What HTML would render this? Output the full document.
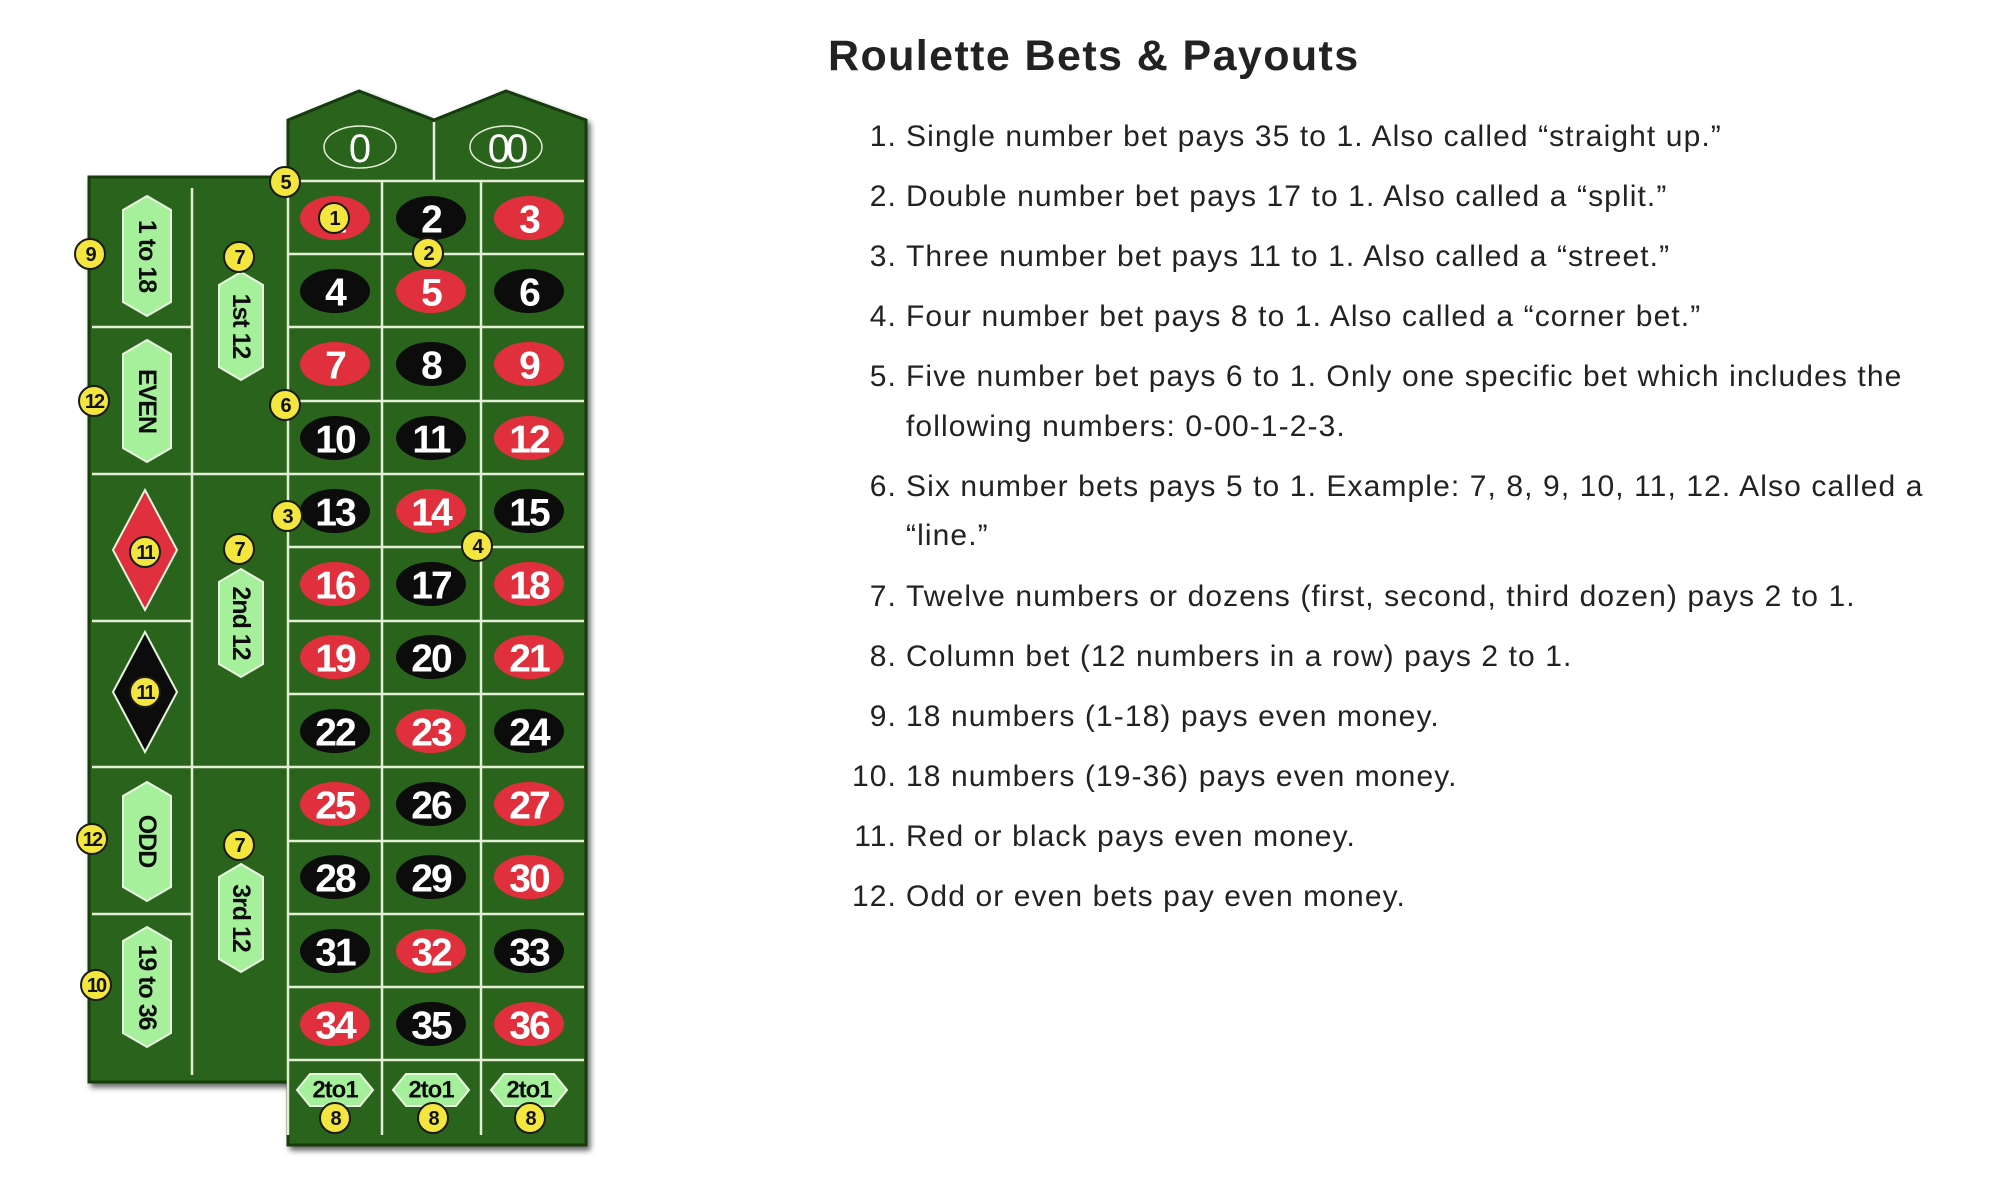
<!DOCTYPE html>
<html><head><meta charset="utf-8"><style>
html,body{margin:0;padding:0;background:#fff;width:1996px;height:1188px;overflow:hidden}
#t{position:absolute;left:0;top:0}
h1{position:absolute;left:828px;top:32px;margin:0;font:bold 43px "Liberation Sans",sans-serif;color:#222;letter-spacing:1.4px}
ol{position:absolute;left:906px;top:112px;margin:0;padding:0;width:1030px;font:30px/49.5px "Liberation Sans",sans-serif;color:#222;list-style:none;letter-spacing:1.1px}
ol li{position:relative;margin-bottom:10.6px}
ol li span{position:absolute;right:100%;margin-right:9px;white-space:nowrap}
</style></head><body>
<svg id="t" width="1996" height="1188" viewBox="0 0 1996 1188" font-family="Liberation Sans, sans-serif">
<defs><filter id="sh" x="-10%" y="-10%" width="130%" height="130%"><feDropShadow dx="3" dy="4" stdDeviation="3" flood-color="#000" flood-opacity="0.6"/></filter></defs>
<path d="M89,177 H288 V120 L359,91 L434,120 L506,91 L586,120 V1145 H288 V1082 H89 Z" fill="#2b641d" stroke="#143a0c" stroke-width="3" filter="url(#sh)"/>
<g stroke="#e4eed6" stroke-width="2.5">
<line x1="288" y1="181" x2="584" y2="181"/>
<line x1="288" y1="254" x2="584" y2="254"/><line x1="288" y1="327" x2="584" y2="327"/>
<line x1="288" y1="401" x2="584" y2="401"/><line x1="288" y1="474" x2="584" y2="474"/>
<line x1="288" y1="547" x2="584" y2="547"/><line x1="288" y1="621" x2="584" y2="621"/>
<line x1="288" y1="694" x2="584" y2="694"/><line x1="288" y1="767" x2="584" y2="767"/>
<line x1="288" y1="841" x2="584" y2="841"/><line x1="288" y1="914" x2="584" y2="914"/>
<line x1="288" y1="987" x2="584" y2="987"/><line x1="288" y1="1060" x2="584" y2="1060"/>
<line x1="288" y1="181" x2="288" y2="1135"/><line x1="382" y1="181" x2="382" y2="1135"/><line x1="481" y1="181" x2="481" y2="1135"/>
<line x1="434" y1="122" x2="434" y2="181"/>
<line x1="192" y1="188" x2="192" y2="1075"/>
<line x1="92" y1="327" x2="192" y2="327"/><line x1="92" y1="621" x2="192" y2="621"/><line x1="92" y1="914" x2="192" y2="914"/>
<line x1="92" y1="474" x2="288" y2="474"/><line x1="92" y1="767" x2="288" y2="767"/>
</g>
<g fill="none" stroke="#e4eed6" stroke-width="1.5"><ellipse cx="360" cy="147" rx="36" ry="21"/><ellipse cx="506" cy="147" rx="36" ry="21"/></g>
<g fill="#fff" font-size="40" text-anchor="middle" dominant-baseline="central"><text x="360" y="149">0</text><text x="506" y="149" letter-spacing="-4">00</text></g>
<g>
<ellipse cx="335" cy="218" rx="35" ry="22" fill="#e0303e"/><ellipse cx="431" cy="218" rx="35" ry="22" fill="#0c0c0c"/><ellipse cx="529" cy="218" rx="35" ry="22" fill="#e0303e"/>
<ellipse cx="335" cy="291" rx="35" ry="22" fill="#0c0c0c"/><ellipse cx="431" cy="291" rx="35" ry="22" fill="#e0303e"/><ellipse cx="529" cy="291" rx="35" ry="22" fill="#0c0c0c"/>
<ellipse cx="335" cy="364" rx="35" ry="22" fill="#e0303e"/><ellipse cx="431" cy="364" rx="35" ry="22" fill="#0c0c0c"/><ellipse cx="529" cy="364" rx="35" ry="22" fill="#e0303e"/>
<ellipse cx="335" cy="438" rx="35" ry="22" fill="#0c0c0c"/><ellipse cx="431" cy="438" rx="35" ry="22" fill="#0c0c0c"/><ellipse cx="529" cy="438" rx="35" ry="22" fill="#e0303e"/>
<ellipse cx="335" cy="511" rx="35" ry="22" fill="#0c0c0c"/><ellipse cx="431" cy="511" rx="35" ry="22" fill="#e0303e"/><ellipse cx="529" cy="511" rx="35" ry="22" fill="#0c0c0c"/>
<ellipse cx="335" cy="584" rx="35" ry="22" fill="#e0303e"/><ellipse cx="431" cy="584" rx="35" ry="22" fill="#0c0c0c"/><ellipse cx="529" cy="584" rx="35" ry="22" fill="#e0303e"/>
<ellipse cx="335" cy="657" rx="35" ry="22" fill="#e0303e"/><ellipse cx="431" cy="657" rx="35" ry="22" fill="#0c0c0c"/><ellipse cx="529" cy="657" rx="35" ry="22" fill="#e0303e"/>
<ellipse cx="335" cy="731" rx="35" ry="22" fill="#0c0c0c"/><ellipse cx="431" cy="731" rx="35" ry="22" fill="#e0303e"/><ellipse cx="529" cy="731" rx="35" ry="22" fill="#0c0c0c"/>
<ellipse cx="335" cy="804" rx="35" ry="22" fill="#e0303e"/><ellipse cx="431" cy="804" rx="35" ry="22" fill="#0c0c0c"/><ellipse cx="529" cy="804" rx="35" ry="22" fill="#e0303e"/>
<ellipse cx="335" cy="877" rx="35" ry="22" fill="#0c0c0c"/><ellipse cx="431" cy="877" rx="35" ry="22" fill="#0c0c0c"/><ellipse cx="529" cy="877" rx="35" ry="22" fill="#e0303e"/>
<ellipse cx="335" cy="951" rx="35" ry="22" fill="#0c0c0c"/><ellipse cx="431" cy="951" rx="35" ry="22" fill="#e0303e"/><ellipse cx="529" cy="951" rx="35" ry="22" fill="#0c0c0c"/>
<ellipse cx="335" cy="1024" rx="35" ry="22" fill="#e0303e"/><ellipse cx="431" cy="1024" rx="35" ry="22" fill="#0c0c0c"/><ellipse cx="529" cy="1024" rx="35" ry="22" fill="#e0303e"/>
</g>
<g fill="#fff" font-size="39" font-weight="bold" text-anchor="middle" dominant-baseline="central" letter-spacing="-2">
<text x="335" y="220">1</text><text x="431" y="220">2</text><text x="529" y="220">3</text>
<text x="335" y="293">4</text><text x="431" y="293">5</text><text x="529" y="293">6</text>
<text x="335" y="366">7</text><text x="431" y="366">8</text><text x="529" y="366">9</text>
<text x="335" y="440">10</text><text x="431" y="440">11</text><text x="529" y="440">12</text>
<text x="335" y="513">13</text><text x="431" y="513">14</text><text x="529" y="513">15</text>
<text x="335" y="586">16</text><text x="431" y="586">17</text><text x="529" y="586">18</text>
<text x="335" y="659">19</text><text x="431" y="659">20</text><text x="529" y="659">21</text>
<text x="335" y="733">22</text><text x="431" y="733">23</text><text x="529" y="733">24</text>
<text x="335" y="806">25</text><text x="431" y="806">26</text><text x="529" y="806">27</text>
<text x="335" y="879">28</text><text x="431" y="879">29</text><text x="529" y="879">30</text>
<text x="335" y="953">31</text><text x="431" y="953">32</text><text x="529" y="953">33</text>
<text x="335" y="1026">34</text><text x="431" y="1026">35</text><text x="529" y="1026">36</text>
</g>
<g fill="#a6f09c" stroke="#e8f5e0" stroke-width="2">
<path d="M147,196 L171,210 V302 L147,316 L123,302 V210 Z"/>
<path d="M147,340 L171,354 V448 L147,462 L123,448 V354 Z"/>
<path d="M147,782 L171,796 V887 L147,901 L123,887 V796 Z"/>
<path d="M147,927 L171,941 V1033 L147,1047 L123,1033 V941 Z"/>
<path d="M241,272 L263,285 V367 L241,380 L219,367 V285 Z"/>
<path d="M241,569 L263,582 V664 L241,677 L219,664 V582 Z"/>
<path d="M241,864 L263,877 V959 L241,972 L219,959 V877 Z"/>
<path d="M297,1090 L310,1074 H360 L373,1090 L360,1106 H310 Z"/>
<path d="M393,1090 L406,1074 H456 L469,1090 L456,1106 H406 Z"/>
<path d="M491,1090 L504,1074 H554 L567,1090 L554,1106 H504 Z"/>
</g>
<path d="M145,490 L177,550 L145,610 L113,550 Z" fill="#e0303e" stroke="#e8f5e0" stroke-width="2"/>
<path d="M145,632 L177,692 L145,752 L113,692 Z" fill="#0c0c0c" stroke="#e8f5e0" stroke-width="2"/>
<g fill="#0c0c0c" font-size="25" font-weight="bold" text-anchor="middle" dominant-baseline="central" letter-spacing="-1">
<text transform="translate(147,256) rotate(90)">1 to 18</text>
<text transform="translate(147,401) rotate(90)">EVEN</text>
<text transform="translate(147,841) rotate(90)">ODD</text>
<text transform="translate(147,987) rotate(90)">19 to 36</text>
<text transform="translate(241,326) rotate(90)">1st 12</text>
<text transform="translate(241,623) rotate(90)">2nd 12</text>
<text transform="translate(241,918) rotate(90)">3rd 12</text>
<text x="335" y="1090" font-size="24">2to1</text><text x="431" y="1090" font-size="24">2to1</text><text x="529" y="1090" font-size="24">2to1</text>
</g>
<g fill="#f3e63e" stroke="#1a1a1a" stroke-width="2">
<circle cx="285" cy="182" r="15"/><circle cx="334" cy="218" r="15"/><circle cx="428" cy="253" r="15"/>
<circle cx="90" cy="254" r="15"/><circle cx="239" cy="257" r="15"/><circle cx="94" cy="401" r="15"/>
<circle cx="285" cy="405" r="15"/><circle cx="287" cy="516" r="15"/><circle cx="477" cy="546" r="15"/>
<circle cx="145" cy="552" r="15"/><circle cx="239" cy="549" r="15"/><circle cx="145" cy="692" r="15"/>
<circle cx="92" cy="839" r="15"/><circle cx="239" cy="845" r="15"/><circle cx="96" cy="985" r="15"/>
<circle cx="335" cy="1118" r="15"/><circle cx="433" cy="1118" r="15"/><circle cx="530" cy="1118" r="15"/>
</g>
<g fill="#111" font-size="20" font-weight="bold" text-anchor="middle" dominant-baseline="central" letter-spacing="-2">
<text x="285" y="183">5</text><text x="334" y="219">1</text><text x="428" y="254">2</text>
<text x="90" y="255">9</text><text x="239" y="258">7</text><text x="94" y="402">12</text>
<text x="285" y="406">6</text><text x="287" y="517">3</text><text x="477" y="547">4</text>
<text x="145" y="553">11</text><text x="239" y="550">7</text><text x="145" y="693">11</text>
<text x="92" y="840">12</text><text x="239" y="846">7</text><text x="96" y="986">10</text>
<text x="335" y="1119">8</text><text x="433" y="1119">8</text><text x="530" y="1119">8</text>
</g>
</svg>
<h1>Roulette Bets &amp; Payouts</h1>
<ol>
<li><span>1.</span>Single number bet pays 35 to 1. Also called “straight up.”</li>
<li><span>2.</span>Double number bet pays 17 to 1. Also called a “split.”</li>
<li><span>3.</span>Three number bet pays 11 to 1. Also called a “street.”</li>
<li><span>4.</span>Four number bet pays 8 to 1. Also called a “corner bet.”</li>
<li><span>5.</span>Five number bet pays 6 to 1. Only one specific bet which includes the<br>following numbers: 0-00-1-2-3.</li>
<li><span>6.</span>Six number bets pays 5 to 1. Example: 7, 8, 9, 10, 11, 12. Also called a<br>“line.”</li>
<li><span>7.</span>Twelve numbers or dozens (first, second, third dozen) pays 2 to 1.</li>
<li><span>8.</span>Column bet (12 numbers in a row) pays 2 to 1.</li>
<li><span>9.</span>18 numbers (1-18) pays even money.</li>
<li><span>10.</span>18 numbers (19-36) pays even money.</li>
<li><span>11.</span>Red or black pays even money.</li>
<li><span>12.</span>Odd or even bets pay even money.</li>
</ol>
</body></html>
